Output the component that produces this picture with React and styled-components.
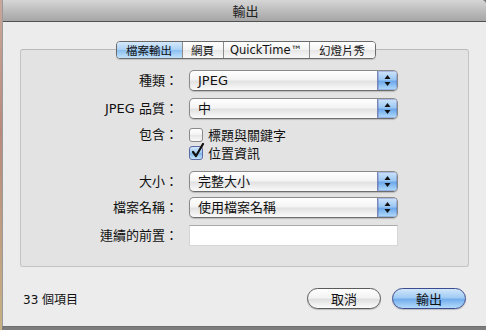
import React from "react";
import styled, { createGlobalStyle } from "styled-components";

const GlobalStyle = createGlobalStyle`
  html, body {
    margin: 0;
    padding: 0;
    background: #8d8d8d;
  }
  body {
    font-family: "Lucida Grande", "DejaVu Sans", "Noto Sans CJK TC", sans-serif;
    font-size: 13px;
    color: #000;
  }
`;

const Desktop = styled.div`
  width: 486px;
  height: 330px;
  display: flex;
  overflow: hidden;
  background: #7c7c7c;
`;

const DesktopEdge = styled.div`
  width: 2px;
  background: linear-gradient(180deg, #c9a79a 0%, #b98a7c 40%, #c7b184 100%);
`;

const Window = styled.div`
  flex: 1;
  height: 327px;
  display: flex;
  flex-direction: column;
  background: #ececec;
  border-left: 1px solid #9a9a9a;
  border-bottom: 1px solid #6f6f6f;
  border-top-right-radius: 5px;
  box-sizing: border-box;
`;

const TitleBar = styled.div`
  height: 22px;
  flex: none;
  display: flex;
  align-items: center;
  justify-content: center;
  background: linear-gradient(180deg, #d6d6d6 0%, #bdbdbd 50%, #a6a6a6 100%);
  border-bottom: 1px solid #515151;
  border-top-right-radius: 5px;
  box-sizing: border-box;
  font-family: "Noto Sans CJK TC", sans-serif;
  font-size: 13px;
  color: #222;
  padding-left: 2px;
`;

const Body = styled.div`
  flex: 1;
  display: flex;
  flex-direction: column;
  padding: 19px 17px 0 17px;
`;

const TabBar = styled.div`
  align-self: center;
  display: flex;
  height: 18px;
  margin-left: 2px;
  margin-bottom: -10px;
  position: relative;
  z-index: 1;
  border: 1px solid #6b6b6b;
  border-radius: 4px;
  overflow: hidden;
  box-sizing: border-box;
  box-shadow: 0 1px 1px rgba(0, 0, 0, 0.15);
`;

const Tab = styled.div`
  width: ${(p) => p.$w}px;
  display: flex;
  align-items: center;
  justify-content: center;
  font-size: 11.5px;
  font-family: ${(p) =>
    p.$latin
      ? '"Lucida Grande", "DejaVu Sans", sans-serif'
      : '"Noto Sans CJK TC", sans-serif'};
  color: #111;
  box-sizing: border-box;
  border-left: ${(p) => (p.$first ? "none" : "1px solid #8c8c8c")};
  background: ${(p) =>
    p.$active
      ? "linear-gradient(180deg, #d5e9fb 0%, #a9d0f5 50%, #88bdf0 51%, #c2e3fc 100%)"
      : "linear-gradient(180deg, #ffffff 0%, #f3f3f3 50%, #e6e6e6 51%, #f8f8f8 100%)"};
`;

const Panel = styled.div`
  height: 218px;
  box-sizing: border-box;
  background: #e3e3e3;
  border: 1px solid #c4c4c4;
  border-top-color: #b9b9b9;
  border-radius: 3px;
  padding-top: 20px;
  display: flex;
  flex-direction: column;
`;

const Row = styled.div`
  display: grid;
  grid-template-columns: 157px 209px;
  column-gap: 11px;
  align-items: center;
  height: ${(p) => (p.$check ? 14 : 21)}px;
  line-height: 14px;
  margin-top: ${(p) => p.$mt || 0}px;
`;

const Label = styled.div`
  text-align: right;
  font-family: "Lucida Grande", "DejaVu Sans", "Noto Sans CJK TC", sans-serif;
  font-size: 13px;
  white-space: nowrap;
  color: #111;
`;

const Popup = styled.div`
  height: 21px;
  box-sizing: border-box;
  display: flex;
  border: 1px solid #8a8a8a;
  border-bottom-color: #6e6e6e;
  border-radius: 5px;
  overflow: hidden;
  background: linear-gradient(180deg, #ffffff 0%, #f4f4f4 45%, #e2e2e2 55%, #fafafa 100%);
  box-shadow: 0 1px 1px rgba(0, 0, 0, 0.18);
`;

const PopupText = styled.div`
  flex: 1;
  display: flex;
  align-items: center;
  padding-left: 8px;
  font-family: "Lucida Grande", "DejaVu Sans", "Noto Sans CJK TC", sans-serif;
  font-size: 13px;
  color: #111;
`;

const Stepper = styled.div`
  width: 19px;
  display: flex;
  align-items: center;
  justify-content: center;
  border-left: 1px solid #7a86b8;
  background: linear-gradient(180deg, #cfe4fa 0%, #9cc8f3 45%, #6ea9ea 55%, #b4dcfb 100%);
  box-shadow: inset 0 0 0 1px rgba(60, 60, 150, 0.25);
`;

const Check = styled.div`
  width: 14px;
  height: 14px;
  box-sizing: border-box;
  border: 1px solid #8a8a8a;
  border-radius: 3px;
  position: relative;
  flex: none;
  background: ${(p) =>
    p.$on
      ? "linear-gradient(180deg, #d3e8fb 0%, #9fcaf3 50%, #7db6ee 51%, #c4e4fc 100%)"
      : "linear-gradient(180deg, #ffffff 0%, #f2f2f2 50%, #e6e6e6 51%, #fafafa 100%)"};
  border-color: ${(p) => (p.$on ? "#5c6aa8" : "#8a8a8a")};
`;

const CheckMark = styled.svg`
  position: absolute;
  left: 1px;
  top: -4px;
`;

const CheckRow = styled.div`
  display: flex;
  align-items: center;
  height: 14px;
  gap: 5px;
  font-family: "Noto Sans CJK TC", sans-serif;
  font-size: 13px;
  color: #111;
`;

const TextField = styled.div`
  height: 21px;
  box-sizing: border-box;
  background: #fff;
  border: 1px solid #d6d6d6;
  border-top-color: #a9a9a9;
`;

const Footer = styled.div`
  display: flex;
  align-items: center;
  margin-top: 21px;
  padding: 0 3px 0 3px;
`;

const Status = styled.div`
  flex: 1;
  font-family: "Lucida Grande", "DejaVu Sans", "Noto Sans CJK TC", sans-serif;
  font-size: 12px;
  color: #111;
`;

const Button = styled.div`
  width: 74px;
  height: 21px;
  box-sizing: border-box;
  margin-left: 11px;
  display: flex;
  align-items: center;
  justify-content: center;
  border-radius: 11px;
  border: 1px solid ${(p) => (p.$primary ? "#3d4c8f" : "#5a5a5a")};
  font-family: "Noto Sans CJK TC", sans-serif;
  font-size: 13px;
  color: #111;
  box-shadow: 0 1px 1px rgba(0, 0, 0, 0.2);
  background: ${(p) =>
    p.$primary
      ? "linear-gradient(180deg, #d0e6fb 0%, #a2cbf3 45%, #74aeec 55%, #b3dbfb 100%)"
      : "linear-gradient(180deg, #ffffff 0%, #f3f3f3 45%, #e0e0e0 55%, #fbfbfb 100%)"};
`;

const Arrows = () => (
  <svg width="9" height="13" viewBox="0 0 9 13">
    <path d="M4.5 1 L7.5 5 L1.5 5 Z" fill="#111" />
    <path d="M4.5 12 L7.5 8 L1.5 8 Z" fill="#111" />
  </svg>
);

const Select = ({ value }) => (
  <Popup>
    <PopupText>{value}</PopupText>
    <Stepper>
      <Arrows />
    </Stepper>
  </Popup>
);

const App = () => (
  <>
    <GlobalStyle />
    <Desktop>
      <DesktopEdge />
      <Window>
        <TitleBar>輸出</TitleBar>
        <Body>
          <TabBar>
            <Tab $w={65} $first $active>檔案輸出</Tab>
            <Tab $w={41}>網頁</Tab>
            <Tab $w={86} $latin>QuickTime™</Tab>
            <Tab $w={66}>幻燈片秀</Tab>
          </TabBar>
          <Panel>
            <Row>
              <Label>種類：</Label>
              <Select value="JPEG" />
            </Row>
            <Row $mt={7}>
              <Label>JPEG 品質：</Label>
              <Select value="中" />
            </Row>
            <Row $check $mt={9}>
              <Label>包含：</Label>
              <CheckRow>
                <Check />
                標題與關鍵字
              </CheckRow>
            </Row>
            <Row $check $mt={4}>
              <Label />
              <CheckRow>
                <Check $on>
                  <CheckMark width="14" height="16" viewBox="0 0 14 16">
                    <path
                      d="M2 9 L5 13 L12 1"
                      fill="none"
                      stroke="#111"
                      strokeWidth="2.2"
                      strokeLinecap="round"
                      strokeLinejoin="round"
                    />
                  </CheckMark>
                </Check>
                位置資訊
              </CheckRow>
            </Row>
            <Row $mt={11}>
              <Label>大小：</Label>
              <Select value="完整大小" />
            </Row>
            <Row $mt={5}>
              <Label>檔案名稱：</Label>
              <Select value="使用檔案名稱" />
            </Row>
            <Row $mt={7}>
              <Label>連續的前置：</Label>
              <TextField />
            </Row>
          </Panel>
          <Footer>
            <Status>33 個項目</Status>
            <Button>取消</Button>
            <Button $primary>輸出</Button>
          </Footer>
        </Body>
      </Window>
    </Desktop>
  </>
);

export default App;
